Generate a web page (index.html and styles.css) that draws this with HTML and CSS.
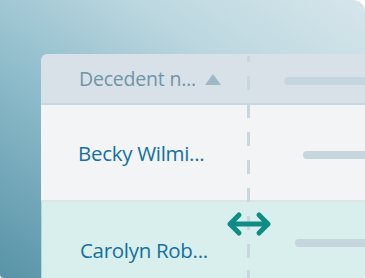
FILE: index.html
```html
<!DOCTYPE html>
<html>
<head>
<meta charset="utf-8">
<link rel="stylesheet" href="styles.css">
</head>
<body>
<div class="frame">
  <div class="table">
    <div class="row head">
      <div class="cell name">
        <span class="label">Decedent n...</span>
        <span class="sort"></span>
      </div>
      <div class="cell rest"><span class="bar bar-head"></span></div>
    </div>
    <div class="row r1">
      <div class="cell name"><span class="value">Becky Wilmi...</span></div>
      <div class="cell rest"><span class="bar bar-r1"></span></div>
    </div>
    <div class="row r2">
      <div class="cell name"><span class="value">Carolyn Rob...</span></div>
      <div class="cell rest"><span class="bar bar-r2"></span></div>
    </div>
    <div class="divider"></div>
    <svg class="resize" width="48" height="26" viewBox="0 0 48 26">
      <path d="M5 13 H43 M14 4 L5 13 L14 22 M34 4 L43 13 L34 22" fill="none" stroke="#0f8d84" stroke-width="5" stroke-linecap="round" stroke-linejoin="round"/>
    </svg>
  </div>
</div>
</body>
</html>
```

FILE: styles.css
```css
html, body {
  margin: 0;
  padding: 0;
  background: #ffffff;
}
.frame {
  width: 365px;
  height: 278px;
  box-sizing: border-box;
  padding: 54px 0 0 41px;
  border-radius: 0 12px 4px 4px;
  overflow: hidden;
  background: linear-gradient(35deg, #5893a7 0%, #8ebccb 40%, #bcd7e0 70%, #d6e6eb 100%);
  display: flex;
  font-family: "Open Sans", "Noto Sans", sans-serif;
}
.table {
  position: relative;
  flex: 1;
  display: flex;
  flex-direction: column;
  border-top-left-radius: 6px;
  overflow: hidden;
}
.row {
  display: flex;
  flex-shrink: 0;
}
.cell.name {
  width: 208px;
  box-sizing: border-box;
  display: flex;
  align-items: center;
}
.cell.rest {
  flex: 1;
  display: flex;
  align-items: center;
}
.head {
  height: 49px;
  background: #d8e1e7;
  border-bottom: 2px solid #c7d7df;
}
.head .name {
  padding-left: 38px;
}
.label {
  font-size: 19.5px;
  color: #6e95a8;
  letter-spacing: -0.2px;
}
.sort {
  width: 0;
  height: 0;
  margin-left: 9px;
  margin-top: 2px;
  border-left: 8px solid transparent;
  border-right: 8px solid transparent;
  border-bottom: 11px solid #9db8c6;
}
.r1 {
  height: 95px;
  background: #f2f4f6;
  border-bottom: 2px solid #dde4e8;
}
.r1 .name {
  padding-left: 37px;
}
.r2 {
  flex: 1;
  background: #d9efed;
  box-shadow: inset 1px 0 0 #b9d6d6;
  align-items: flex-start;
}
.r2 .name {
  height: 95px;
  padding-left: 39px;
}
.value {
  font-size: 20.5px;
  color: #15709f;
  letter-spacing: -0.3px;
}
.bar {
  display: block;
  height: 8px;
  border-radius: 4px;
  background: #c5d6de;
  flex: 1;
  margin-right: -10px;
}
.bar-head {
  margin-left: 35px;
  margin-top: 5px;
}
.bar-r1 {
  margin-left: 54px;
  margin-top: 4px;
}
.r2 .rest {
  align-items: flex-start;
}
.bar-r2 {
  margin-left: 46px;
  margin-top: 37px;
}
.divider {
  position: absolute;
  left: 206px;
  top: 2px;
  bottom: 0;
  width: 3px;
  background: repeating-linear-gradient(to bottom, #c8d6de 0 14px, transparent 14px 28px);
  background-position: 0 -8px;
}
.resize {
  position: absolute;
  left: 184px;
  top: 157px;
}
```
